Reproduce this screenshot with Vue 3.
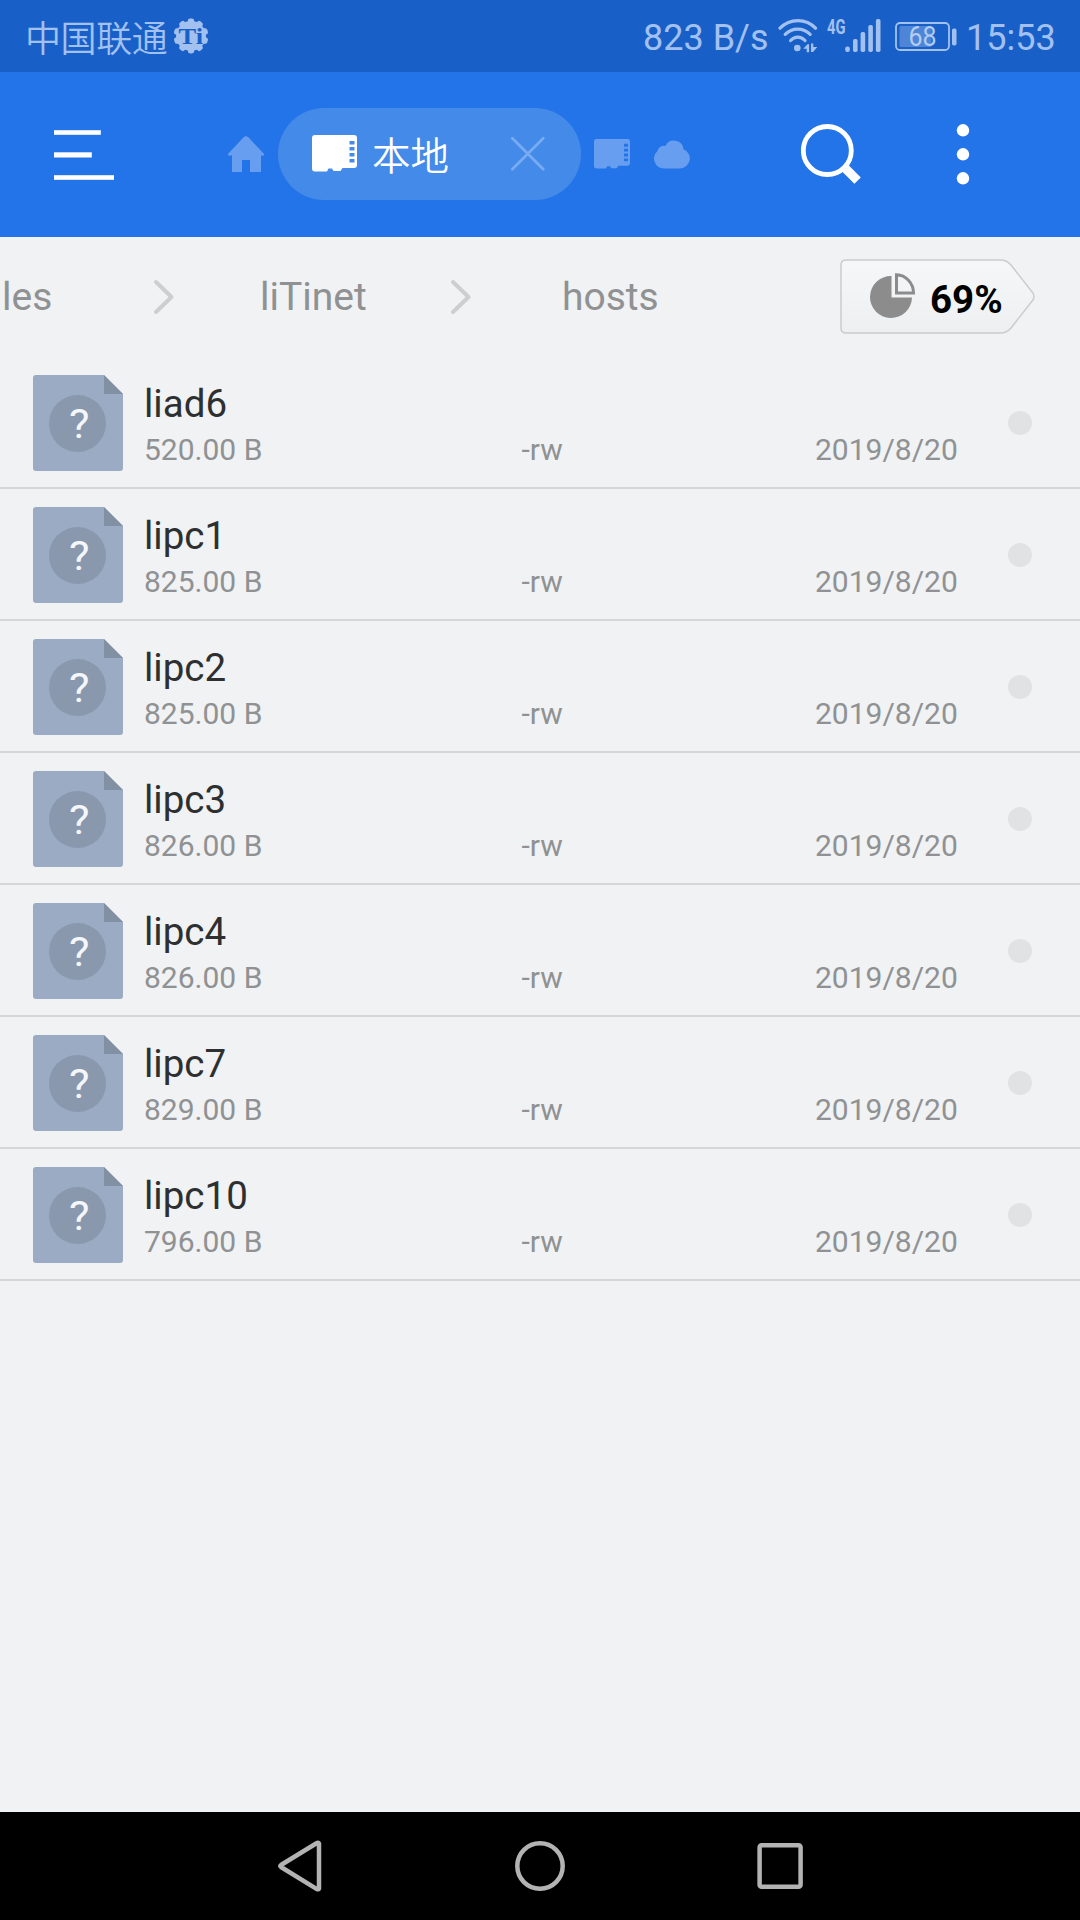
<script setup>
const files = [
  { name: 'liad6', size: '520.00 B' },
  { name: 'lipc1', size: '825.00 B' },
  { name: 'lipc2', size: '825.00 B' },
  { name: 'lipc3', size: '826.00 B' },
  { name: 'lipc4', size: '826.00 B' },
  { name: 'lipc7', size: '829.00 B' },
  { name: 'lipc10', size: '796.00 B' },
]
const teeth = Array.from({ length: 10 }, (_, i) => i * 36)
</script>

<template>
  <div class="screen">
    <header class="status">
      <span class="carrier">中国联通</span>
      <svg class="gear" width="36" height="36" viewBox="0 0 36 36">
        <circle cx="18" cy="18" r="15" />
        <rect v-for="a in teeth" :key="a" x="14.8" y="0.6" width="6.4" height="6" rx="2.4" :transform="`rotate(${a} 18 18)`" />
        <text x="5.5" y="25.5" textLength="24.5" lengthAdjust="spacingAndGlyphs">Ti</text>
      </svg>
      <span class="speed">823 B/s</span>
      <svg class="wifi" width="40" height="34" viewBox="0 0 40 34">
        <g fill="none" stroke="#a3c1ef" stroke-width="3.2" stroke-linecap="round">
          <path d="M2 9.2C12-.9 28-.9 37.500 9.200" />
          <path d="M7.200 15.300c7-7 18-7 25 0" />
          <path d="M12.600 21.500c4.200-4.500 10.200-4.500 14.400 0" />
        </g>
        <circle cx="19.300" cy="29" r="3.300" fill="#a3c1ef" />
        <path d="M25.300 29.800l4.200-4.600h1.600v8h-2.400v-3.400zM33 24.500h2.300v3.600h4l-4.300 5H33z" fill="#a3c1ef" />
      </svg>
      <svg class="signal" width="54" height="38" viewBox="0 -4 54 38">
        <text class="net" x="0" y="15" textLength="18.500" lengthAdjust="spacingAndGlyphs">4G</text>
        <g fill="#a3c1ef">
          <rect x="18.200" y="27.500" width="4.600" height="5.500" rx="2" />
          <rect x="26" y="20" width="4.600" height="13" rx="1.800" />
          <rect x="33.600" y="13" width="4.600" height="20" rx="1.800" />
          <rect x="41.300" y="6" width="4.600" height="27" rx="1.800" />
          <rect x="48.900" y="0" width="4.600" height="33" rx="1.800" />
        </g>
      </svg>
      <svg class="battery" width="62" height="30" viewBox="0 0 62 30">
        <rect x="1" y="1" width="53" height="27" rx="4" fill="none" stroke="#a3c1ef" stroke-width="1.800" />
        <rect x="4.500" y="4" width="32" height="21" rx="1.500" fill="#4f85d6" />
        <rect x="57" y="6.500" width="4.500" height="17" rx="1.800" fill="#a3c1ef" />
        <text x="13.500" y="24" textLength="28" lengthAdjust="spacingAndGlyphs">68</text>
      </svg>
      <span class="clock">15:53</span>
    </header>

    <nav class="toolbar">
      <svg class="menu" width="60" height="50" viewBox="0 0 60 50" fill="#fff">
        <rect y="0.200" width="46.800" height="4.600" />
        <rect y="22.300" width="37.800" height="5.200" />
        <rect y="45.200" width="60" height="4.600" />
      </svg>
      <svg class="home" width="36" height="36" viewBox="0 0 36 36">
        <path d="M15.600 1.300Q18-1 20.400 1.300L36 18v1.500h-3V36H22V24h-8v12H4V19.500H0V18z" fill="#679eef" />
      </svg>
      <div class="tab">
        <svg class="card" width="45" height="37" viewBox="0 0 45 37">
          <path fill="#fff" fill-rule="evenodd" d="M3 0H42q3 0 3 3V30q0 3-3 3H30.500l-2 3H21.500l-1.500-2.500h-3.500L15 36.500H3q-3 0-3-3V3Q0 0 3 0zM37.500 6v3.500h5V6zM37.500 12v3.500h5V12zM37.500 18v3.500h5V18zM37.500 24v3.500h5V24z" />
        </svg>
        <span class="tab-name">本地</span>
        <svg class="close" width="36" height="36" viewBox="0 0 36 36">
          <path d="M2.300 2.300l31 31M33.300 2.300l-31 31" stroke="#78abf2" stroke-width="2.700" stroke-linecap="round" />
        </svg>
      </div>
      <svg class="card-small" width="36" height="30" viewBox="0 0 45 37" preserveAspectRatio="none">
        <path fill="#679eef" fill-rule="evenodd" d="M3 0H42q3 0 3 3V30q0 3-3 3H30.500l-2 3H21.500l-1.500-2.500h-3.500L15 36.500H3q-3 0-3-3V3Q0 0 3 0zM37.500 6v3.500h5V6zM37.500 12v3.500h5V12zM37.500 18v3.500h5V18zM37.500 24v3.500h5V24z" />
      </svg>
      <svg class="cloud" width="36" height="30" viewBox="0 0 36 30">
        <path d="M10 29.500A10 10 0 0 1 3.500 12A6.500 6.500 0 0 1 11.500 7A9.500 9.500 0 0 1 29.500 10.200A10 10 0 0 1 26 29.500z" fill="#679eef" />
      </svg>
      <svg class="search" width="62" height="62" viewBox="0 0 62 62" fill="none" stroke="#fff">
        <circle cx="26.300" cy="26.500" r="24" stroke-width="4.800" />
        <path d="M43 43L56.600 56.600" stroke-width="9" />
      </svg>
      <svg class="more" width="14" height="62" viewBox="0 0 14 62" fill="#fff">
        <circle cx="7" cy="6.300" r="6.200" /><circle cx="7" cy="30.300" r="6.200" /><circle cx="7" cy="54.300" r="6.200" />
      </svg>
    </nav>

    <div class="crumbs">
      <span class="crumb first">les</span>
      <svg class="chevron" width="22" height="36" viewBox="0 0 22 36"><path d="M3 3L18.500 18L3 33" /></svg>
      <span class="crumb second">liTinet</span>
      <svg class="chevron" width="22" height="36" viewBox="0 0 22 36"><path d="M3 3L18.500 18L3 33" /></svg>
      <span class="crumb third">hosts</span>
      <div class="usage">
        <svg class="usage-shape" width="196" height="76" viewBox="0 0 196 76">
          <defs>
            <linearGradient id="usage-fill" x1="0" y1="0" x2="0" y2="1">
              <stop offset="0" stop-color="#f6f7f9" /><stop offset="1" stop-color="#eeeff1" />
            </linearGradient>
          </defs>
          <path d="M6 1H160Q167 1 171 6L192.500 33.500Q195.500 37.500 192.500 41.500L171 69Q167 74 160 74H6Q1 74 1 69V6Q1 1 6 1z" fill="url(#usage-fill)" stroke="#cbcccd" stroke-width="1.500" />
        </svg>
        <svg class="pie" width="46" height="46" viewBox="0 0 46 46">
          <path d="M21.500 3V24.500H42A21 21 0 1 1 21.500 3z" fill="#8c8c8c" />
          <path d="M26.500 1.700V20H43.500A17.500 18.500 0 0 0 26.500 1.700z" fill="none" stroke="#8c8c8c" stroke-width="3" />
        </svg>
        <span class="percent">69%</span>
      </div>
    </div>

    <ul class="files">
      <li v-for="f in files" :key="f.name" class="file">
        <svg class="doc" width="90" height="96" viewBox="0 0 90 96">
          <path d="M3 0H71L90 19V93q0 3-3 3H3q-3 0-3-3V3Q0 0 3 0z" fill="#9babc4" />
          <path d="M71 0L90 19H71z" fill="#8190a3" />
          <circle cx="44.500" cy="48.500" r="28.500" fill="#8998ad" />
          <text x="36" y="63" textLength="20.500" lengthAdjust="spacingAndGlyphs">?</text>
        </svg>
        <div class="info">
          <div class="name">{{ f.name }}</div>
          <div class="meta">
            <span class="size">{{ f.size }}</span>
            <span class="mode">-rw</span>
            <span class="date">2019/8/20</span>
          </div>
        </div>
        <i class="dot"></i>
      </li>
    </ul>

    <footer class="navbar">
      <svg width="50" height="54" viewBox="0 0 50 54"><path d="M44 4.500Q43.500 3 41.500 4.200L6 26Q4.500 27 6 28L41.500 49.800Q43.500 51 44 49.500z" /></svg>
      <svg width="54" height="54" viewBox="0 0 54 54"><circle cx="27" cy="27" r="22.700" /></svg>
      <svg width="50" height="54" viewBox="0 0 50 54"><rect x="4.600" y="6.200" width="41" height="41.600" rx="2" /></svg>
    </footer>
  </div>
</template>

<style>
body {
  margin: 0;
  background: #f0f2f4;
}
</style>

<style scoped>
.screen {
  width: 1080px;
  height: 1920px;
  display: flex;
  flex-direction: column;
  background: #f0f2f4;
  overflow: hidden;
  font-family: Roboto, "Noto Sans CJK SC", sans-serif;
}
svg {
  display: block;
  flex: none;
}
span {
  white-space: nowrap;
  flex: none;
}
.status {
  height: 72px;
  flex: none;
  display: flex;
  align-items: flex-start;
  background: #1860c8;
  color: #a3c1ef;
}
.carrier {
  width: 148px;
  margin-left: 25px;
  font: 350 36px/72px "Noto Sans CJK SC", sans-serif;
  letter-spacing: -0.4px;
}
.gear {
  margin-top: 18px;
  fill: #a3c1ef;
}
.gear text {
  font: bold 24px "Liberation Serif", serif;
  fill: #1860c8;
}
.speed {
  width: 126px;
  margin-left: 434px;
  font-size: 36px;
  line-height: 76px;
}
.wifi {
  margin: 19px 0 0 9px;
}
.signal {
  margin: 15px 0 0 9px;
}
.net {
  font: bold 20px Roboto, sans-serif;
  fill: #a3c1ef;
}
.battery {
  margin: 22px 0 0 14px;
}
.battery text {
  font: 27px Roboto, sans-serif;
  fill: #b3ccf2;
}
.clock {
  margin-left: 9px;
  font-size: 36px;
  line-height: 76px;
}
.toolbar {
  height: 165px;
  flex: none;
  display: flex;
  align-items: flex-start;
  background: #2374e8;
}
.menu {
  margin: 58px 0 0 54px;
}
.home {
  margin: 64px 0 0 114px;
}
.tab {
  box-sizing: border-box;
  width: 303px;
  height: 92px;
  margin: 36px 0 0 13.500px;
  padding-left: 34.500px;
  display: flex;
  align-items: flex-start;
  border-radius: 46px;
  background: #448ae9;
}
.card {
  margin-top: 27px;
}
.tab-name {
  width: 80px;
  margin-left: 15px;
  color: #fff;
  font: 350 38.500px/91px "Noto Sans CJK SC", sans-serif;
}
.close {
  margin: 28px 0 0 57.500px;
}
.card-small {
  margin: 67px 0 0 13px;
}
.cloud {
  margin: 67px 0 0 24px;
}
.search {
  margin: 52px 0 0 111px;
}
.more {
  margin: 52px 0 0 93px;
}
.crumbs {
  height: 120px;
  flex: none;
  display: flex;
  align-items: flex-start;
}
.crumb {
  color: #8f9193;
  font-size: 39px;
  line-height: 121px;
}
.first {
  width: 151px;
  margin-left: 2px;
}
.chevron {
  margin-top: 42px;
}
.chevron path {
  fill: none;
  stroke: #cdcecf;
  stroke-width: 4;
  stroke-linecap: round;
  stroke-linejoin: round;
}
.second {
  width: 190px;
  margin-left: 85px;
}
.third {
  width: 178px;
  margin-left: 90px;
}
.usage {
  position: relative;
  width: 196px;
  height: 76px;
  margin: 22px 44px 0 auto;
  display: flex;
  align-items: flex-start;
}
.usage-shape {
  position: absolute;
  inset: 0;
}
.pie {
  position: relative;
  margin: 14px 0 0 30px;
}
.percent {
  position: relative;
  margin-left: 14px;
  color: #000;
  font-weight: 700;
  font-size: 38.500px;
  line-height: 82px;
}
.files {
  flex: 1;
  margin: 0;
  padding: 0;
  list-style: none;
}
.file {
  box-sizing: border-box;
  height: 132px;
  display: flex;
  align-items: flex-start;
  border-bottom: 2px solid #d4d6d8;
}
.doc {
  margin: 18px 0 0 33px;
}
.doc text {
  font: 41px Roboto, sans-serif;
  fill: #f4f6f9;
}
.info {
  width: 864px;
  margin: 20px 0 0 21px;
}
.name {
  color: #2e2f30;
  font-size: 38.500px;
  line-height: 54px;
}
.meta {
  display: flex;
  color: #8f9193;
  font-size: 30px;
  line-height: 38px;
}
.size {
  width: 377.500px;
}
.mode {
  width: 293.500px;
}
.dot {
  width: 24px;
  height: 24px;
  margin-top: 54px;
  border-radius: 50%;
  background: #e1e2e4;
}
.navbar {
  height: 108px;
  flex: none;
  display: flex;
  justify-content: space-between;
  align-items: center;
  box-sizing: border-box;
  padding: 0 275px;
  background: #000;
}
.navbar svg {
  fill: none;
  stroke: #b3b3b3;
  stroke-width: 4.500;
}
</style>
